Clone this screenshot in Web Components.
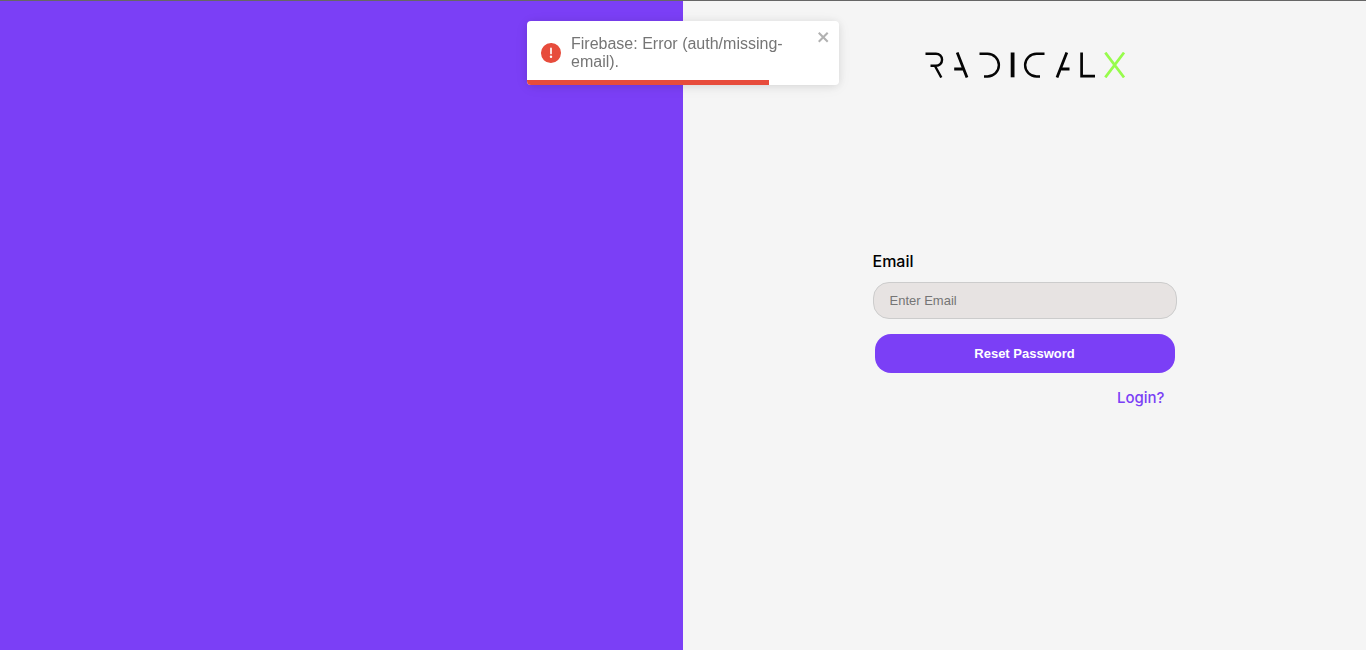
<!DOCTYPE html>
<html lang="en">
<head>
<meta charset="utf-8">
<title>Reset Password</title>
<style>
html, body { height: 100%; margin: 0; }
body { font-family: "Liberation Sans", Arial, sans-serif; background: #f5f5f5; }
</style>
</head>
<body>
<reset-page></reset-page>
<script>
class BrandLogo extends HTMLElement {
  constructor() {
    super();
    this.attachShadow({ mode: "open" }).innerHTML = `
      <style>
        :host { display: block; width: 200px; }
        svg { display: block; width: 100%; fill: none; stroke: #050505; stroke-width: 2.4; }
      </style>
      <svg viewBox="0 0 200 26" role="img" aria-label="RadicalX">
        <path d="M.5 1.7H11A6 6 0 0 1 11 13.8H5.5M10 14L16.3 25.5"/>
        <path stroke-width="2.8" d="M32.2.5L42 25.5M29.2 17H38"/>
        <path d="M54.5 1.7H62.5A11.4 11.4 0 0 1 62.5 24.5H59"/>
        <path stroke-width="3.8" d="M87.6.5V25.3"/>
        <path d="M119.5 1.7H111.5A11.4 11.4 0 0 0 111.5 24.5H115"/>
        <path stroke-width="2.8" d="M141.8.5L132 25.5M136.5 17H144.5"/>
        <path stroke-width="2.7" d="M156.6.5V24.2H170"/>
        <path stroke="#97fc4c" stroke-width="2.7" d="M180.3.6L199 25.4M199 .6L180.3 25.4"/>
      </svg>`;
  }
}
customElements.define("brand-logo", BrandLogo);

class ErrorToast extends HTMLElement {
  constructor() {
    super();
    this.attachShadow({ mode: "open" }).innerHTML = `
      <style>
        :host { display: block; box-sizing: border-box; width: 312px; max-width: 100%; background: #fff; border-radius: 4px; overflow: hidden;
          box-shadow: 0 1px 10px rgba(0,0,0,.1), 0 2px 15px rgba(0,0,0,.05); color: #757575; font-size: 16px; line-height: 18px; }
        .row { display: flex; align-items: center; padding: 8px 8px 8px 14px; min-height: 48px; }
        .icon { width: 20px; flex: none; margin-right: 10px; fill: #e74c3c; }
        .text { flex: 1; }
        button { align-self: flex-start; border: 0; padding: 0; background: none; color: #000; opacity: .3; display: block; }
        button svg { display: block; width: 14px; height: 16px; fill: currentColor; }
        .bar { height: 5px; width: 242px; margin-top: -5px; background: #e74c3c; }
      </style>
      <div class="row" role="alert">
        <svg class="icon" viewBox="0 0 24 24" aria-hidden="true"><path d="M11.983 0a12.206 12.206 0 00-8.51 3.653A11.8 11.8 0 000 12.207 11.779 11.779 0 0011.8 24h.214A12.111 12.111 0 0024 11.791 11.766 11.766 0 0011.983 0zM10.5 16.542a1.476 1.476 0 011.449-1.53h.027a1.527 1.527 0 011.523 1.47 1.475 1.475 0 01-1.449 1.53h-.027a1.529 1.529 0 01-1.523-1.47zM11 12.5v-6a1 1 0 012 0v6a1 1 0 11-2 0z"/></svg>
        <div class="text"><slot></slot></div>
        <button type="button" aria-label="Close"><svg viewBox="0 0 14 16"><path fill-rule="evenodd" d="M7.71 8.23l3.75 3.75-1.48 1.48-3.75-3.75-3.75 3.75L1 11.98l3.75-3.75L1 4.48 2.48 3l3.75 3.75L9.98 3l1.48 1.48-3.75 3.75z"/></svg></button>
      </div>
      <div class="bar"></div>`;
  }
}
customElements.define("error-toast", ErrorToast);

class ResetForm extends HTMLElement {
  constructor() {
    super();
    this.attachShadow({ mode: "open" }).innerHTML = `
      <style>
        :host { display: block; width: 304px; max-width: 100%; }
        form { display: flex; flex-direction: column; }
        label { font: 500 16px/18px Inter, sans-serif; color: #000; }
        input { box-sizing: border-box; width: 100%; height: 37px; margin: 12px 0 15px; padding: 0 16px; border: 1px solid #ccc; border-radius: 16px;
          background: #e7e3e2; font: 13px "Liberation Sans", Arial, sans-serif; color: #000; }
        input::placeholder { color: #757575; }
        button { height: 39px; margin: 0 2px; border: 0; border-radius: 16px; background: #7b3ff6; color: #fff; font: bold 13px "Liberation Sans", Arial, sans-serif; }
        a { align-self: flex-end; margin: 15px 12px 0 0; font: 500 15px/20px Inter, sans-serif; color: #7b3ff6; text-decoration: none; }
      </style>
      <form novalidate>
        <label for="email">Email</label>
        <input id="email" type="email" placeholder="Enter Email">
        <button type="button">Reset Password</button>
        <a href="#login">Login?</a>
      </form>`;
  }
}
customElements.define("reset-form", ResetForm);

class ResetPage extends HTMLElement {
  constructor() {
    super();
    this.attachShadow({ mode: "open" }).innerHTML = `
      <style>
        :host { display: grid; grid-template-columns: 1fr 1fr; box-sizing: border-box; min-height: 100vh; border-top: 1px solid #666; }
        .brand { background: #7b3ff6; }
        main { display: flex; flex-direction: column; align-items: center; padding: 51px 16px 32px; background: #f5f5f5; }
        reset-form { margin-top: 174px; }
        .toast { position: fixed; top: 21px; left: 0; right: 0; display: flex; justify-content: center; }
      </style>
      <div class="brand"></div>
      <main>
        <brand-logo></brand-logo>
        <reset-form></reset-form>
      </main>
      <div class="toast"><error-toast>Firebase: Error (auth/missing-email).</error-toast></div>`;
  }
}
customElements.define("reset-page", ResetPage);
</script>
</body>
</html>
